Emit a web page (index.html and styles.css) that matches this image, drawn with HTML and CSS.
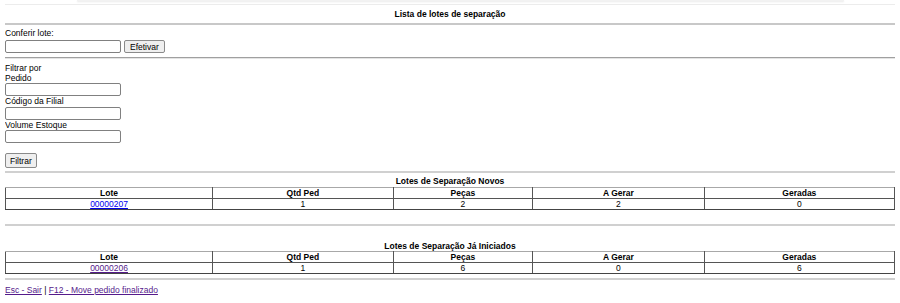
FILE: index.html
```html
<!DOCTYPE html>
<html lang="pt-BR">
<head>
  <meta charset="UTF-8" />
  <title>Lista de lotes de separação</title>
  <link rel="stylesheet" href="styles.css">
</head>
<body>
  <div class="topbar"><div class="topbar-box"></div></div>

  <div class="page-title">Lista de lotes de separação</div>
  <hr class="hr-main">

  <form class="conferir">
    <div class="label">Conferir lote:</div>
    <div class="row">
      <input type="text" class="txt">
      <button type="button" class="btn">Efetivar</button>
    </div>
  </form>
  <hr class="hr-thin">

  <form class="filtro">
    <div class="label">Filtrar por</div>
    <div class="label">Pedido</div>
    <input type="text" class="txt">
    <div class="label">Código da Filial</div>
    <input type="text" class="txt second">
    <div class="label">Volume Estoque</div>
    <input type="text" class="txt">
    <button type="button" class="btn btn-filtrar">Filtrar</button>
  </form>
  <hr class="hr-sep">

  <div class="table-title">Lotes de Separação Novos</div>
  <table class="lotes">
    <tr>
      <th class="c1">Lote</th><th class="c2">Qtd Ped</th><th class="c3">Peças</th><th class="c4">A Gerar</th><th class="c5">Geradas</th>
    </tr>
    <tr>
      <td><a href="#lote207" class="lnk">00000207</a></td><td>1</td><td>2</td><td>2</td><td>0</td>
    </tr>
  </table>
  <hr class="hr-sep gap">

  <div class="table-title second">Lotes de Separação Já Iniciados</div>
  <table class="lotes">
    <tr>
      <th class="c1">Lote</th><th class="c2">Qtd Ped</th><th class="c3">Peças</th><th class="c4">A Gerar</th><th class="c5">Geradas</th>
    </tr>
    <tr>
      <td><a href="#lote206" class="lnk visited">00000206</a></td><td>1</td><td>6</td><td>0</td><td>6</td>
    </tr>
  </table>
  <hr class="hr-sep foot">

  <div class="footer">
    <a href="#sair" class="lnk visited">Esc - Sair</a> | <a href="#f12" class="lnk visited">F12 - Move pedido finalizado</a>
  </div>
</body>
</html>
```

FILE: styles.css
```css
body {
  margin: 0 5px;
  font-family: "Liberation Sans", Arial, sans-serif;
  font-size: 8.5px;
  line-height: 10px;
  color: #000;
  background: #fff;
}

.topbar {
  height: 4px;
  margin: 0 -5px;
  border-bottom: 1px solid #ececec;
}
.topbar-box {
  height: 1px;
  margin: 0 56px 0 77px;
  background: #f2f2f2;
  box-shadow: 0 1px 2px rgba(0,0,0,0.12);
}

.page-title {
  margin-top: 4px;
  text-align: center;
  font-weight: bold;
}

hr {
  border: 0;
  margin: 0;
}
.hr-main {
  margin-top: 4px;
  height: 2px;
  background: #c8c8c8;
}
.hr-thin {
  margin-top: 4px;
  height: 0;
  border-top: 1px solid #a0a0a0;
  border-bottom: 1px solid #e4e4e4;
}
.hr-sep {
  margin-top: 3px;
  height: 2px;
  background: #d0d0d0;
}
.hr-sep.gap { margin-top: 14px; }
.hr-sep.foot { margin-top: 4px; }

.conferir { margin-top: 3px; }
.row {
  display: flex;
  gap: 3px;
  margin-top: 2px;
}

.filtro {
  margin-top: 4px;
  display: flex;
  flex-direction: column;
  align-items: flex-start;
}

.txt {
  box-sizing: border-box;
  width: 116px;
  height: 13px;
  margin: 0;
  padding: 0 2px;
  border: 1px solid #808080;
  border-radius: 2px;
  background: #fff;
  font: inherit;
}
.txt.second { margin-top: 1px; }

.btn {
  box-sizing: border-box;
  height: 13px;
  margin: 0;
  padding: 0 5px;
  border: 1px solid #8a8a8a;
  border-radius: 2px;
  background: #efefef;
  color: #000;
  font: inherit;
  line-height: 10px;
}
.btn-filtrar {
  height: 15px;
  margin-top: 10px;
  padding: 0 4px;
}

.table-title {
  margin-top: 3px;
  text-align: center;
  font-weight: bold;
}
.table-title.second { margin-top: 15px; }

.lotes {
  width: 100%;
  margin-top: 1px;
  border-collapse: collapse;
  border-top: 1px solid #a8a8a8;
  border-right: 1px solid #a8a8a8;
  border-left: 1px solid #444;
  border-bottom: 1px solid #444;
}
.table-title.second + .lotes { margin-top: 0; }

.lotes th, .lotes td {
  padding: 0;
  height: 10px;
  line-height: 10px;
  text-align: center;
  border: 1px solid #555;
}
.lotes th { font-weight: bold; border-top: 1px solid #a8a8a8; }
.lotes td { border-bottom: 1px solid #444; }

.c1 { width: 23.3%; }
.c2 { width: 20.3%; }
.c3 { width: 15.7%; }
.c4 { width: 19.3%; }
.c5 { width: 21.4%; }

.lnk { color: #0000ee; }
.lnk.visited { color: #551a8b; }

.footer { margin-top: 5px; }
```
